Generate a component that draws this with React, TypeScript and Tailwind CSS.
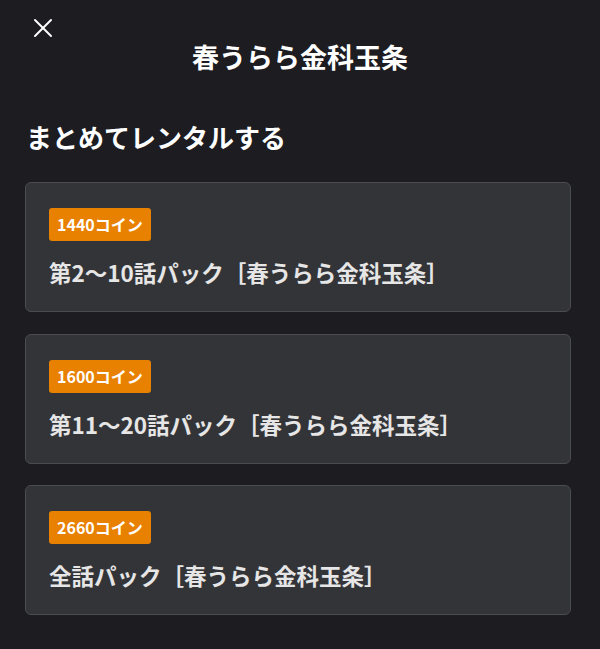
import { X } from "lucide-react";

const packs = [
  { coin: "1440コイン", title: "第2〜10話パック［春うらら金科玉条］" },
  { coin: "1600コイン", title: "第11〜20話パック［春うらら金科玉条］" },
  { coin: "2660コイン", title: "全話パック［春うらら金科玉条］" },
];

export default function App() {
  return (
    <div
      className="w-[600px] h-[649px] bg-[#1c1c21] text-white overflow-hidden"
      style={{ fontFamily: '"Noto Sans CJK JP", "Noto Sans", sans-serif' }}
    >
      <div className="relative h-[118px]">
        <button className="absolute left-[27px] top-[12px] text-white">
          <X className="w-8 h-8" strokeWidth={1.5} />
        </button>
        <h1 className="pt-[37px] text-center text-[27px] font-bold leading-[40px]">
          春うらら金科玉条
        </h1>
      </div>
      <div className="pl-[25px] pr-[29px]">
        <h2 className="text-[26px] font-bold leading-[38px] pl-px">まとめてレンタルする</h2>
        <div className="mt-[26px] flex flex-col gap-[21.5px]">
          {packs.map((p) => (
            <div
              key={p.coin}
              className="h-[130px] rounded-md border border-[#4b4c51] bg-[#333438] px-[23px] pt-[25px]"
            >
              <span className="inline-block rounded-[3px] bg-[#e88000] px-[8px] text-[16px] font-bold leading-[33px] text-white">
                {p.coin}
              </span>
              <p className="mt-[15px] text-[22.5px] font-bold leading-[33px] text-[#e6e6e6]">
                {p.title}
              </p>
            </div>
          ))}
        </div>
      </div>
    </div>
  );
}
